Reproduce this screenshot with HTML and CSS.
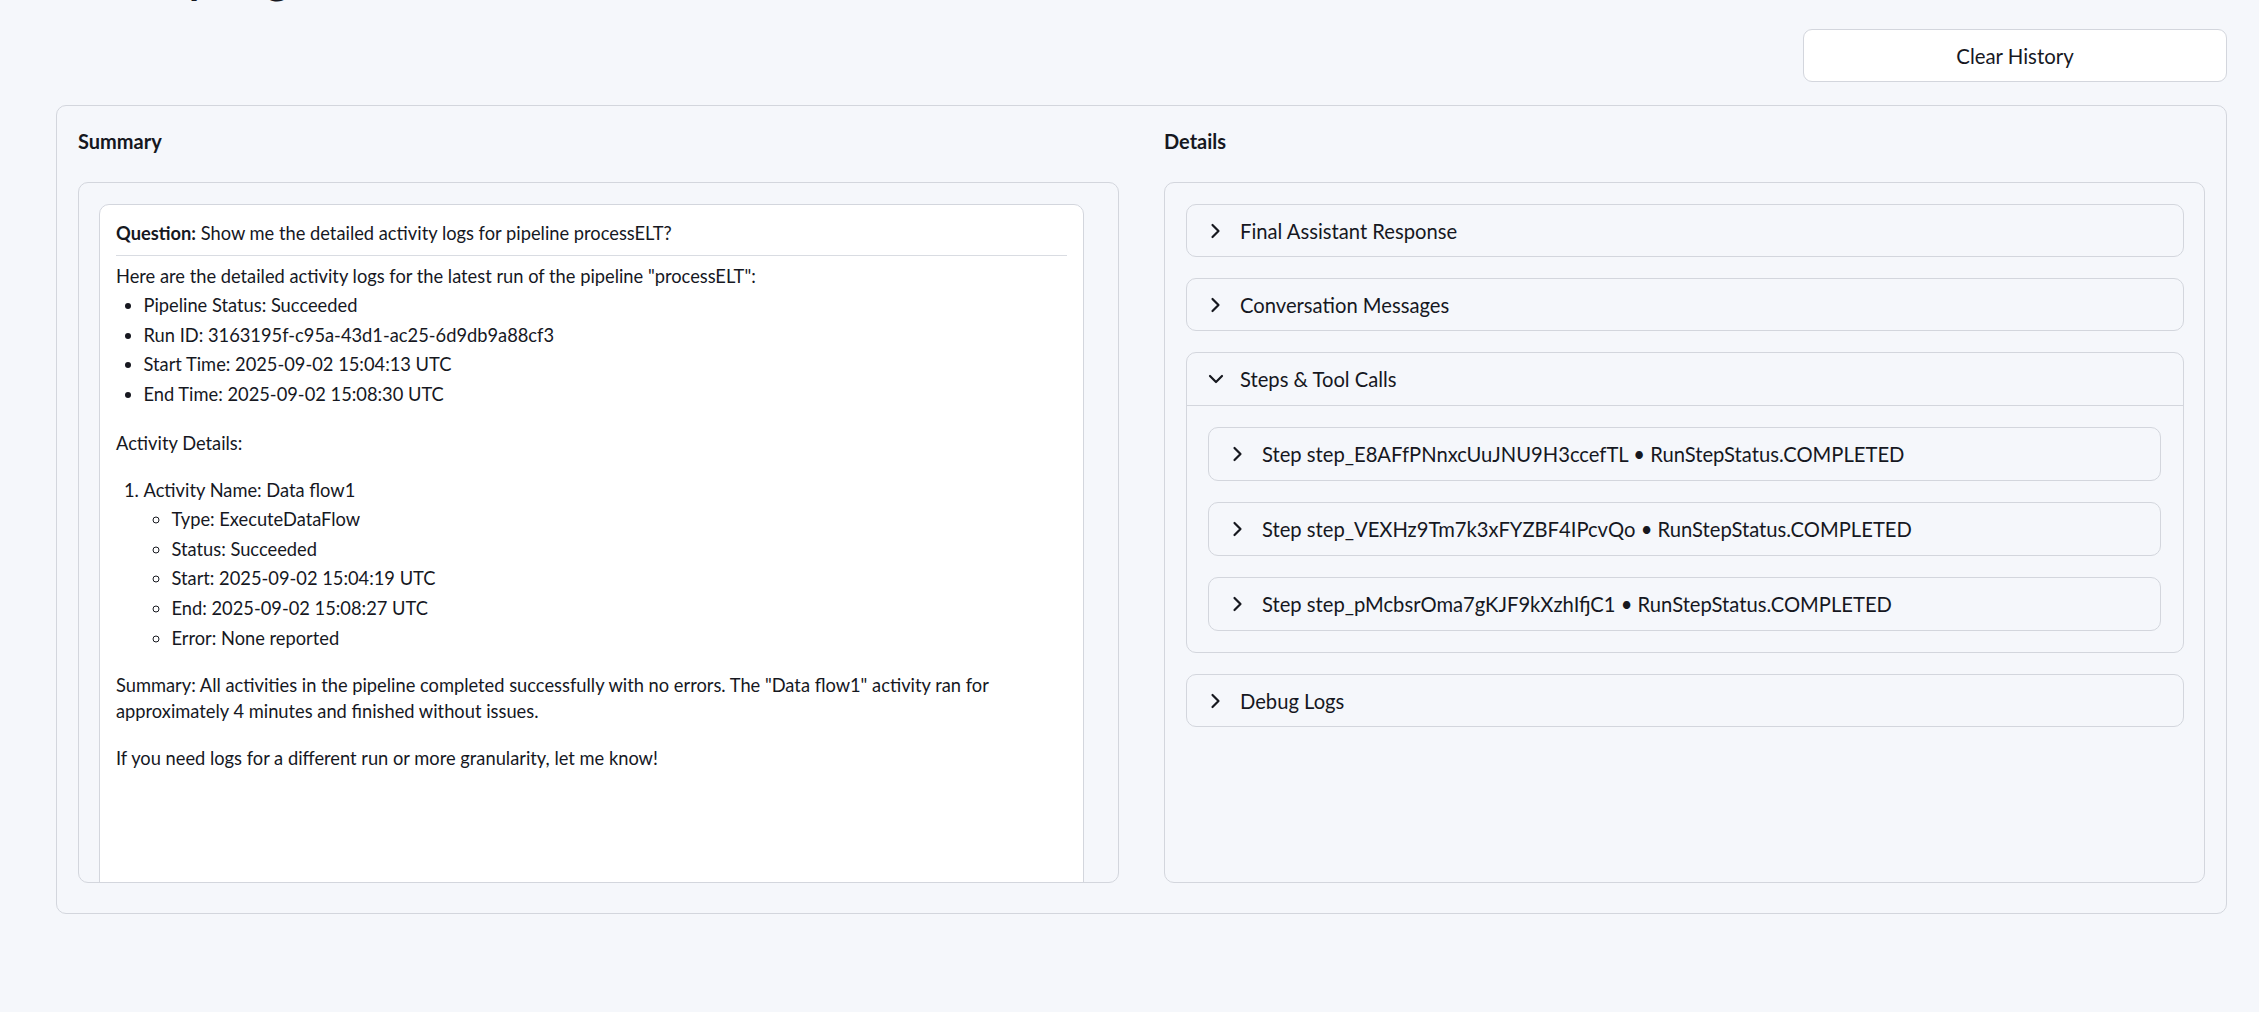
FILE: index.html
```html
<!DOCTYPE html>
<html lang="en">
<head>
<meta charset="utf-8">
<title>Activity Logs</title>
<link rel="stylesheet" href="styles.css">
</head>
<body>
<div class="page">
  <h1 class="title">Activity Logs</h1>
  <div class="toolbar">
    <button class="btn" type="button">Clear History</button>
  </div>
  <div class="panel">
    <section class="col">
      <h3 class="col-title">Summary</h3>
      <div class="card card-summary">
        <div class="msg">
          <div class="question"><strong>Question:</strong> Show me the detailed activity logs for pipeline processELT?</div>
          <p class="intro">Here are the detailed activity logs for the latest run of the pipeline "processELT":</p>
          <ul class="list list-first">
            <li>Pipeline Status: Succeeded</li>
            <li>Run ID: 3163195f-c95a-43d1-ac25-6d9db9a88cf3</li>
            <li>Start Time: 2025-09-02 15:04:13 UTC</li>
            <li>End Time: 2025-09-02 15:08:30 UTC</li>
          </ul>
          <p>Activity Details:</p>
          <ol class="list list-num">
            <li>Activity Name: Data flow1
              <ul class="list list-sub">
                <li>Type: ExecuteDataFlow</li>
                <li>Status: Succeeded</li>
                <li>Start: 2025-09-02 15:04:19 UTC</li>
                <li>End: 2025-09-02 15:08:27 UTC</li>
                <li>Error: None reported</li>
              </ul>
            </li>
          </ol>
          <p>Summary: All activities in the pipeline completed successfully with no errors. The "Data flow1" activity ran for approximately 4 minutes and finished without issues.</p>
          <p>If you need logs for a different run or more granularity, let me know!</p>
        </div>
      </div>
    </section>
    <section class="col">
      <h3 class="col-title">Details</h3>
      <div class="card card-details">
        <div class="acc">
          <div class="acc-head">
            <svg class="chev" viewBox="0 0 16 16" width="16" height="16"><polyline points="4.5,2 10.5,8 4.5,14"/></svg>
            <span class="acc-label">Final Assistant Response</span>
          </div>
        </div>
        <div class="acc">
          <div class="acc-head">
            <svg class="chev" viewBox="0 0 16 16" width="16" height="16"><polyline points="4.5,2 10.5,8 4.5,14"/></svg>
            <span class="acc-label">Conversation Messages</span>
          </div>
        </div>
        <div class="acc acc-open">
          <div class="acc-head">
            <svg class="chev" viewBox="0 0 16 16" width="16" height="16"><polyline points="2,5 8,11 14,5"/></svg>
            <span class="acc-label">Steps &amp; Tool Calls</span>
          </div>
          <div class="acc-body">
            <div class="acc acc-step">
              <div class="acc-head">
                <svg class="chev" viewBox="0 0 16 16" width="16" height="16"><polyline points="4.5,2 10.5,8 4.5,14"/></svg>
                <span class="acc-label">Step step_E8AFfPNnxcUuJNU9H3ccefTL • RunStepStatus.COMPLETED</span>
              </div>
            </div>
            <div class="acc acc-step">
              <div class="acc-head">
                <svg class="chev" viewBox="0 0 16 16" width="16" height="16"><polyline points="4.5,2 10.5,8 4.5,14"/></svg>
                <span class="acc-label">Step step_VEXHz9Tm7k3xFYZBF4IPcvQo • RunStepStatus.COMPLETED</span>
              </div>
            </div>
            <div class="acc acc-step">
              <div class="acc-head">
                <svg class="chev" viewBox="0 0 16 16" width="16" height="16"><polyline points="4.5,2 10.5,8 4.5,14"/></svg>
                <span class="acc-label">Step step_pMcbsrOma7gKJF9kXzhIfjC1 • RunStepStatus.COMPLETED</span>
              </div>
            </div>
          </div>
        </div>
        <div class="acc">
          <div class="acc-head">
            <svg class="chev" viewBox="0 0 16 16" width="16" height="16"><polyline points="4.5,2 10.5,8 4.5,14"/></svg>
            <span class="acc-label">Debug Logs</span>
          </div>
        </div>
      </div>
    </section>
  </div>
</div>
</body>
</html>
```

FILE: styles.css
```css
* { box-sizing: border-box; }

html, body {
  margin: 0;
  padding: 0;
  background: #f5f7fb;
  color: #16181f;
  font-family: "Source Sans Pro", Lato, "Liberation Sans", sans-serif;
}

body {
  height: 1012px;
  overflow: hidden;
}

.page {
  padding: 0 32px 0 56px;
  overflow: hidden;
  height: 1012px;
}

.title {
  margin: -49px 0 0 0;
  height: 53px;
  font-size: 44px;
  line-height: 53px;
  font-weight: 700;
  color: #16181f;
}

.toolbar {
  display: flex;
  justify-content: flex-end;
  margin-top: 25px;
}

.btn {
  width: 424px;
  height: 53px;
  background: #ffffff;
  border: 1px solid #d3d6dd;
  border-radius: 9px;
  font-family: inherit;
  font-size: 20.4px;
  color: #16181f;
  padding: 0;
}

.panel {
  margin-top: 23px;
  border: 1px solid #d3d6dd;
  border-radius: 10px;
  padding: 21px 21px 30px 21px;
  display: grid;
  grid-template-columns: 1fr 1fr;
  column-gap: 45px;
}

.col {
  display: flex;
  flex-direction: column;
  gap: 21px;
  min-width: 0;
}

.col-title {
  margin: -3px 0 3px 0;
  font-size: 20px;
  line-height: 34px;
  font-weight: 700;
}

.card {
  height: 701px;
  border: 1px solid #d3d6dd;
  border-radius: 10px;
}

.card-summary {
  padding: 21px 34px 0 20px;
  overflow: hidden;
}

.msg {
  background: #ffffff;
  border: 1px solid #d3d6dd;
  border-radius: 10px;
  padding: 16px 16px;
  min-height: 900px;
  font-size: 18.3px;
  line-height: 25.6px;
}

.question {
  padding-bottom: 8px;
  border-bottom: 1px solid #d9dce2;
  margin-bottom: 8px;
}

.question strong { font-weight: 700; }

.msg p {
  margin: 0 0 21.5px 0;
}

.msg p.intro { margin-bottom: 4px; }

.list {
  margin: 0;
  padding-left: 27.5px;
}

.list li + li { margin-top: 4px; }

.list-first { margin-bottom: 23px; list-style: disc; }

.list-num { margin-bottom: 22px; list-style: decimal; }

.list-sub {
  margin-top: 4px;
  padding-left: 28px;
  list-style: circle;
}

.card-details {
  padding: 21px 20px 21px 21px;
  display: flex;
  flex-direction: column;
  gap: 21px;
}

.acc {
  border: 1px solid #d3d6dd;
  border-radius: 10px;
}

.acc-head {
  height: 51px;
  display: flex;
  align-items: center;
  padding-left: 21px;
  gap: 16px;
}

.acc-step .acc-head { height: 52px; }

.acc-open > .acc-head {
  height: 53px;
  border-bottom: 1px solid #d3d6dd;
}

.chev {
  flex: none;
  fill: none;
  stroke: #16181f;
  stroke-width: 2.2;
  stroke-linecap: round;
  stroke-linejoin: round;
}

.acc-label {
  font-size: 20.2px;
  white-space: nowrap;
}

.acc-body {
  padding: 21px 22px 21px 21px;
  display: flex;
  flex-direction: column;
  gap: 21px;
}
```
